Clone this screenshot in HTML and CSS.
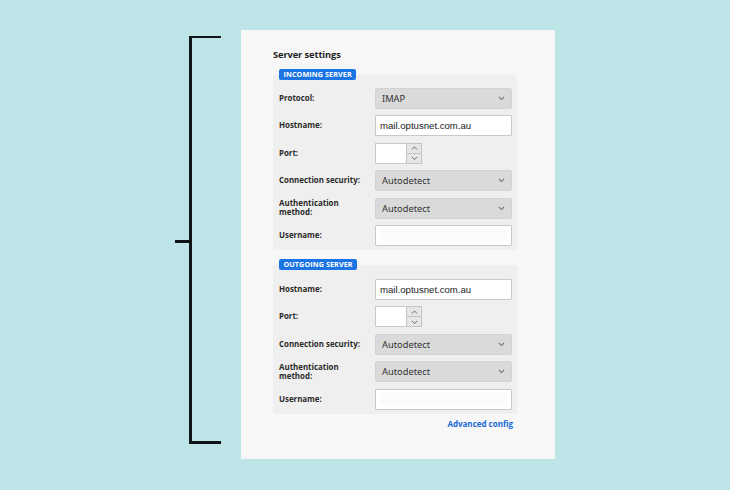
FILE: index.html
```html
<!DOCTYPE html>
<html>
<head>
<meta charset="utf-8">
<link rel="stylesheet" href="styles.css">
</head>
<body>
<div class="stage">
  <div class="bracket"><span class="tick"></span></div>
  <div class="panel">
    <div class="title">Server settings</div>

    <div class="group">
      <div class="badge">INCOMING SERVER</div>
      <div class="rows">
        <div class="row"><div class="label">Protocol:</div><div class="select"><span>IMAP</span><svg class="chev" viewBox="0 0 8 5"><path d="M1 1 L4 4 L7 1"/></svg></div></div>
        <div class="row"><div class="label">Hostname:</div><div class="input"><span>mail.optusnet.com.au</span></div></div>
        <div class="row"><div class="label">Port:</div><div class="port"><div class="portbox"></div><div class="spin"><div class="half"><svg viewBox="0 0 8 5"><path d="M1 4 L4 1 L7 4"/></svg></div><div class="half"><svg viewBox="0 0 8 5"><path d="M1 1 L4 4 L7 1"/></svg></div></div></div></div>
        <div class="row"><div class="label">Connection security:</div><div class="select"><span>Autodetect</span><svg class="chev" viewBox="0 0 8 5"><path d="M1 1 L4 4 L7 1"/></svg></div></div>
        <div class="row"><div class="label two">Authentication<br>method:</div><div class="select"><span>Autodetect</span><svg class="chev" viewBox="0 0 8 5"><path d="M1 1 L4 4 L7 1"/></svg></div></div>
        <div class="row"><div class="label">Username:</div><div class="input"><span class="blur"></span></div></div>
      </div>
    </div>

    <div class="group second">
      <div class="badge">OUTGOING SERVER</div>
      <div class="rows">
        <div class="row"><div class="label">Hostname:</div><div class="input"><span>mail.optusnet.com.au</span></div></div>
        <div class="row"><div class="label">Port:</div><div class="port"><div class="portbox"></div><div class="spin"><div class="half"><svg viewBox="0 0 8 5"><path d="M1 4 L4 1 L7 4"/></svg></div><div class="half"><svg viewBox="0 0 8 5"><path d="M1 1 L4 4 L7 1"/></svg></div></div></div></div>
        <div class="row"><div class="label">Connection security:</div><div class="select"><span>Autodetect</span><svg class="chev" viewBox="0 0 8 5"><path d="M1 1 L4 4 L7 1"/></svg></div></div>
        <div class="row"><div class="label two">Authentication<br>method:</div><div class="select"><span>Autodetect</span><svg class="chev" viewBox="0 0 8 5"><path d="M1 1 L4 4 L7 1"/></svg></div></div>
        <div class="row"><div class="label">Username:</div><div class="input"><span class="blur"></span></div></div>
      </div>
    </div>

    <div class="advanced">Advanced config</div>
  </div>
</div>
</body>
</html>
```

FILE: styles.css
```css
* { box-sizing: border-box; }
html, body { margin: 0; padding: 0; }
body {
  background: #bde5e8;
  width: 730px;
  height: 490px;
  overflow: hidden;
  font-family: "Open Sans", "Noto Sans", sans-serif;
}
.stage {
  display: flex;
  align-items: flex-start;
}
.bracket {
  position: relative;
  margin-left: 189px;
  margin-top: 36px;
  width: 32px;
  height: 408px;
  border-left: 3px solid #111416;
  border-top: 2.5px solid #111416;
  border-bottom: 3px solid #111416;
}
.tick {
  position: absolute;
  left: -17px;
  top: 202px;
  width: 15px;
  height: 2.5px;
  background: #111416;
}
.panel {
  margin-left: 20px;
  margin-top: 30px;
  width: 314px;
  height: 429px;
  background: #f7f7f7;
  padding: 19px 38px 0 32px;
}
.title {
  font-size: 9.3px;
  font-weight: 700;
  color: #1e1e1e;
  line-height: 12px;
  letter-spacing: -0.1px;
  margin-bottom: 14px;
}
.group {
  display: flow-root;
  background: #efefef;
  border-radius: 3px;
  padding: 0 5px 4px 6px;
}
.group.second { margin-top: 15px; }
.badge {
  display: block;
  width: fit-content;
  margin-top: -6px;
  height: 11px;
  line-height: 11px;
  padding: 0 4.5px;
  background: #1b74e4;
  color: #fff;
  font-size: 7.2px;
  font-weight: 700;
  border-radius: 2px;
  letter-spacing: 0.1px;
}
.rows {
  margin-top: 8px;
  display: flex;
  flex-direction: column;
  gap: 6.4px;
}
.second .rows { margin-top: 9px; }
.row {
  display: flex;
  align-items: center;
  height: 21px;
}
.label {
  width: 96px;
  flex: none;
  font-size: 7.9px;
  font-weight: 700;
  color: #2b2b2b;
  line-height: 8.8px;
}
.select {
  flex: 1;
  height: 21px;
  background: #dadada;
  border: 1px solid #d2d2d2;
  border-radius: 2px;
  display: flex;
  align-items: center;
  justify-content: space-between;
  padding: 0 6px 0 6px;
  font-family: "Noto Sans", "Open Sans", sans-serif;
  font-size: 9.3px;
  color: #333;
}
.chev {
  width: 7px;
  height: 4.5px;
  fill: none;
  stroke: #707070;
  stroke-width: 1.2;
}
.input {
  flex: 1;
  height: 21px;
  background: #fff;
  border: 1px solid #c9c9c9;
  border-radius: 1px;
  display: flex;
  align-items: center;
  padding: 0 4px;
  font-family: "Liberation Sans", Arial, sans-serif;
  font-size: 9.6px;
  color: #222;
}
.blur {
  display: block;
  width: 100%;
  height: 12px;
  background: #fbfbfb;
}
.port {
  display: flex;
  height: 21px;
}
.portbox {
  width: 31px;
  height: 21px;
  background: #fff;
  border: 1px solid #c9c9c9;
  border-right: none;
}
.spin {
  width: 16px;
  height: 21px;
  display: flex;
  flex-direction: column;
  border: 1px solid #c4c4c4;
  background: #e6e6e6;
}
.half {
  flex: 1;
  display: flex;
  align-items: center;
  justify-content: center;
}
.half + .half { border-top: 1px solid #c4c4c4; }
.half svg {
  width: 7px;
  height: 4.5px;
  fill: none;
  stroke: #666;
  stroke-width: 1.1;
}
.advanced {
  text-align: right;
  margin-top: 5px;
  margin-right: 4px;
  font-size: 8px;
  font-weight: 700;
  color: #1769d6;
  line-height: 10px;
}
```
